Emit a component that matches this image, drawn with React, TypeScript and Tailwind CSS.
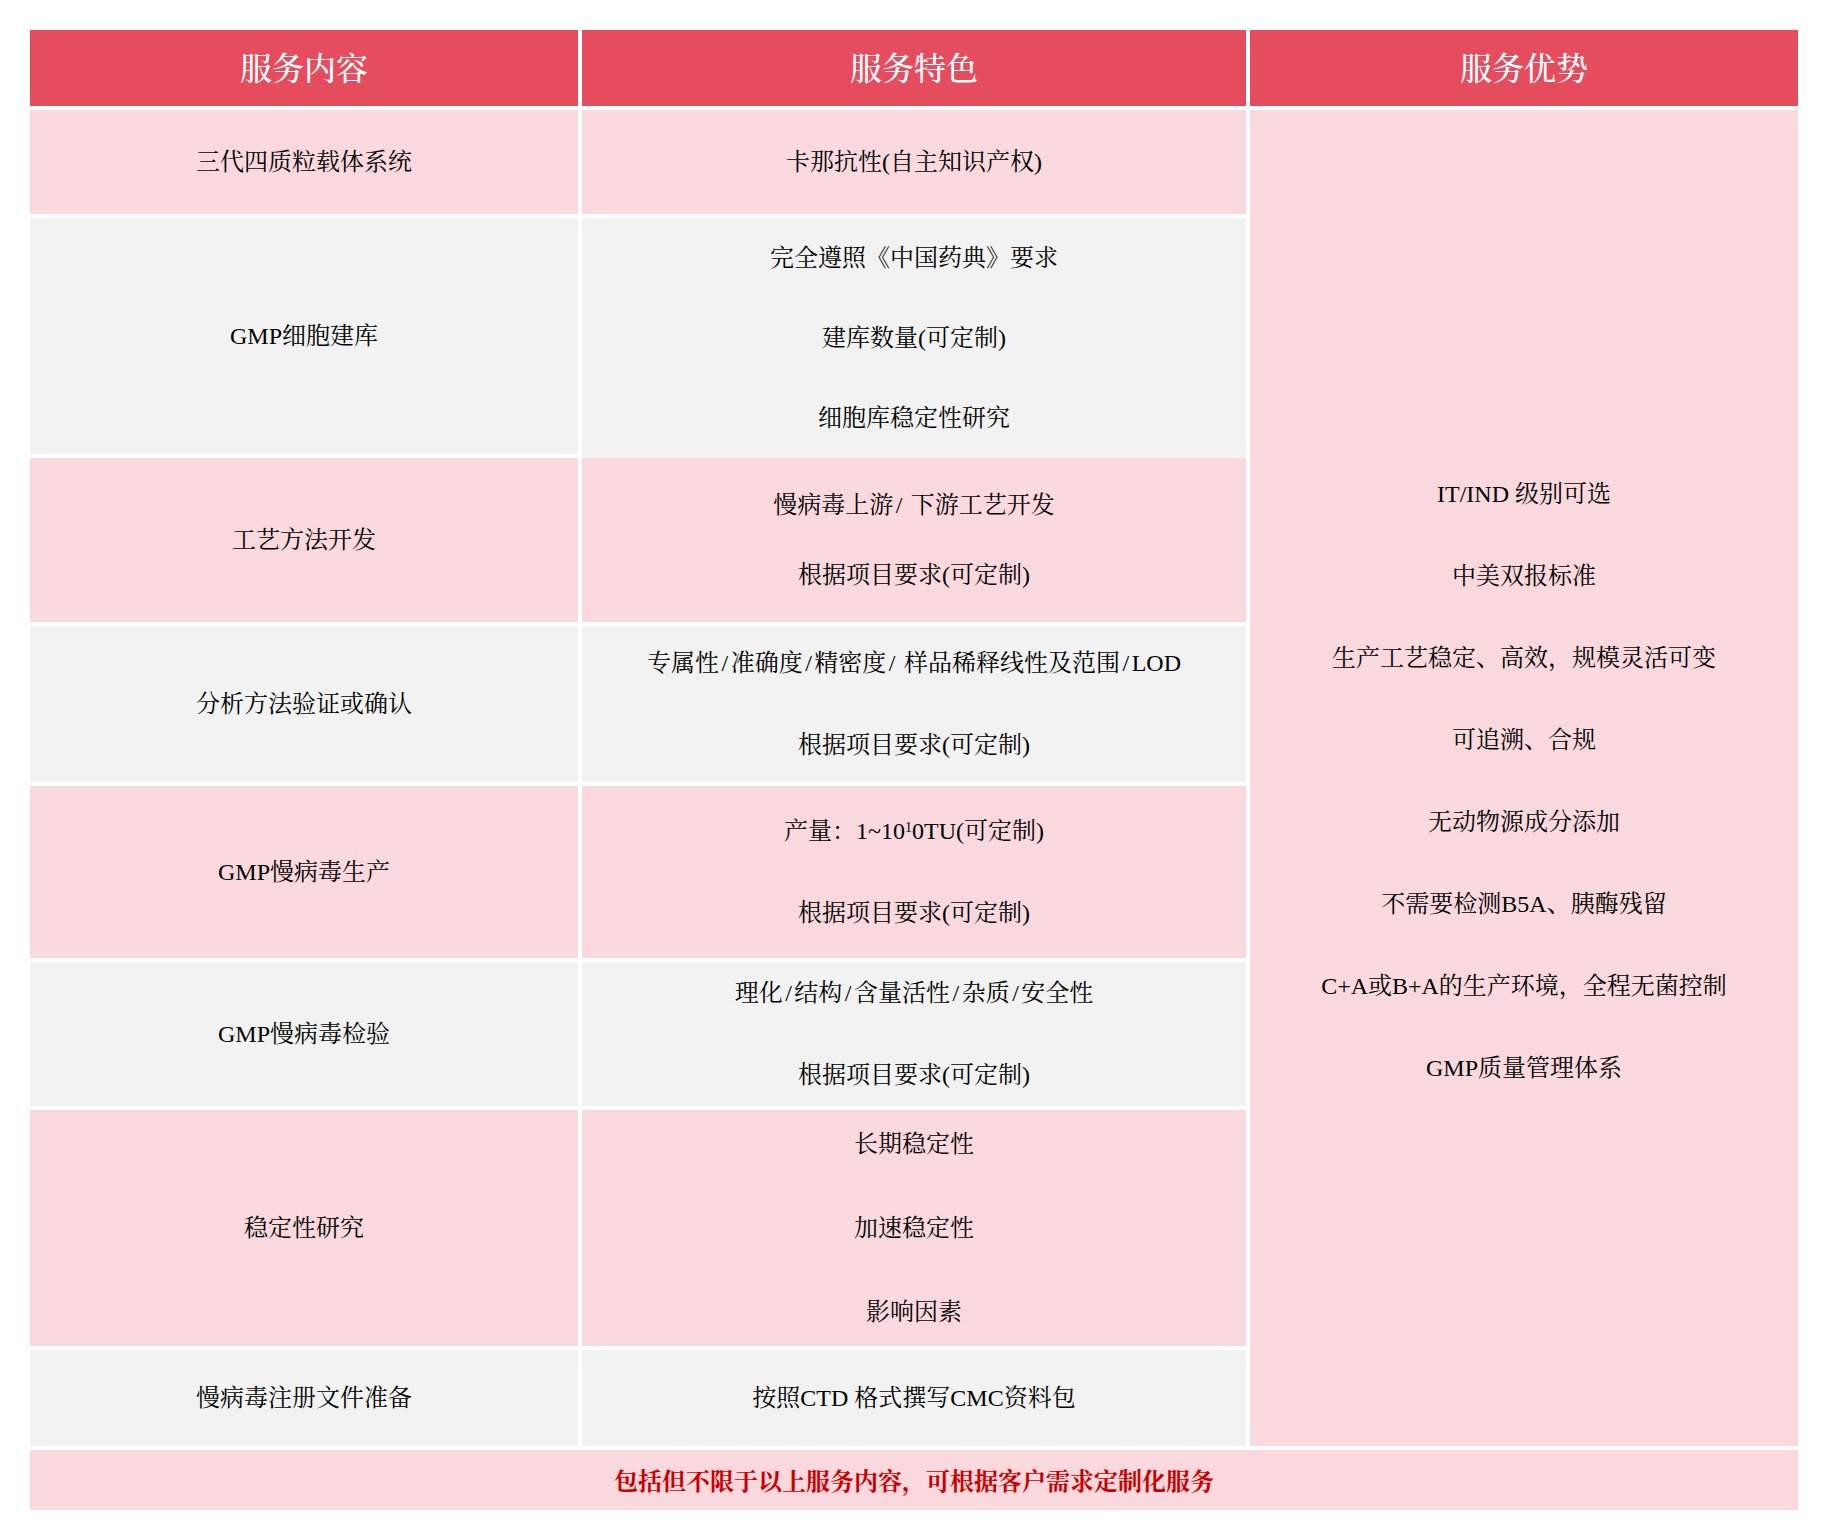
const font =
  "font-['Liberation_Serif','Noto_Serif_CJK_SC','Noto_Sans_CJK_SC',serif]";

const PINK = "bg-[#f9d9de]";
const GRAY = "bg-[#f2f2f2]";

// the source renders "/" noticeably wider than Times does
function Slashed({ text }: { text: string }) {
  const parts = text.split("/");
  return (
    <>
      {parts.map((p, i) => (
        <span key={i}>
          {i > 0 && <span className="px-[2.5px]">/</span>}
          {p}
        </span>
      ))}
    </>
  );
}

function Cell({
  bg,
  lines,
  leading = "leading-[82px]",
  className = "",
}: {
  bg: string;
  lines: React.ReactNode[];
  leading?: string;
  className?: string;
}) {
  return (
    <div
      className={`${bg} flex flex-col items-center justify-center text-center text-[24px] text-black ${leading} ${className}`}
    >
      {lines.map((l, i) => (
        <div key={i}>{l}</div>
      ))}
    </div>
  );
}

const advantages = [
  "IT/IND 级别可选",
  "中美双报标准",
  "生产工艺稳定、高效，规模灵活可变",
  "可追溯、合规",
  "无动物源成分添加",
  "不需要检测B5A、胰酶残留",
  "C+A或B+A的生产环境，全程无菌控制",
  "GMP质量管理体系",
];

export default function App() {
  return (
    <div className={`min-h-[1540px] bg-white px-[30px] pt-[30px] ${font}`}>
      <div className="grid grid-cols-[548px_664px_548px] grid-rows-[76px_104px_236px_164px_156px_172px_144px_236px_96px_60px] gap-1">
        {["服务内容", "服务特色", "服务优势"].map((h) => (
          <div
            key={h}
            className="flex items-center justify-center bg-[#e54d5f] pt-[2px] text-[32px] font-medium text-white"
          >
            {h}
          </div>
        ))}

        {/* row 1 */}
        <Cell bg={PINK} lines={["三代四质粒载体系统"]} />
        <Cell bg={PINK} lines={["卡那抗性(自主知识产权)"]} />
        <Cell bg={PINK} lines={advantages} className="row-span-8 pt-[5px]" />

        {/* row 2 + 3 (feature column has no gap between them) */}
        <Cell bg={GRAY} lines={["GMP细胞建库"]} />
        <div className="row-span-2 flex flex-col">
          <Cell
            bg={GRAY}
            className="h-[240px]"
            leading="leading-[80px]"
            lines={["完全遵照《中国药典》要求", "建库数量(可定制)", "细胞库稳定性研究"]}
          />
          <Cell
            bg={PINK}
            className="h-[164px]"
            leading="leading-[70px]"
            lines={[<Slashed text="慢病毒上游/ 下游工艺开发" />, "根据项目要求(可定制)"]}
          />
        </div>
        <Cell bg={PINK} lines={["工艺方法开发"]} />

        {/* row 4 */}
        <Cell bg={GRAY} lines={["分析方法验证或确认"]} />
        <Cell
          bg={GRAY}
          lines={[
            <Slashed text="专属性/准确度/精密度/ 样品稀释线性及范围/LOD" />,
            "根据项目要求(可定制)",
          ]}
        />

        {/* row 5 */}
        <Cell bg={PINK} lines={["GMP慢病毒生产"]} />
        <Cell
          bg={PINK}
          lines={[
            <>
              产量：1~10<sup className="text-[14px]">1</sup>0TU(可定制)
            </>,
            "根据项目要求(可定制)",
          ]}
        />

        {/* row 6 */}
        <Cell bg={GRAY} lines={["GMP慢病毒检验"]} />
        <Cell
          bg={GRAY}
          lines={[<Slashed text="理化/结构/含量活性/杂质/安全性" />, "根据项目要求(可定制)"]}
        />

        {/* row 7 */}
        <Cell bg={PINK} lines={["稳定性研究"]} />
        <Cell bg={PINK} leading="leading-[84px]" lines={["长期稳定性", "加速稳定性", "影响因素"]} />

        {/* row 8 */}
        <Cell bg={GRAY} lines={["慢病毒注册文件准备"]} />
        <Cell bg={GRAY} lines={["按照CTD 格式撰写CMC资料包"]} />

        {/* footer */}
        <div
          className={`col-span-3 flex items-center justify-center ${PINK} pt-1 text-[24px] font-bold text-[#cc0000]`}
        >
          包括但不限于以上服务内容，可根据客户需求定制化服务
        </div>
      </div>
    </div>
  );
}
